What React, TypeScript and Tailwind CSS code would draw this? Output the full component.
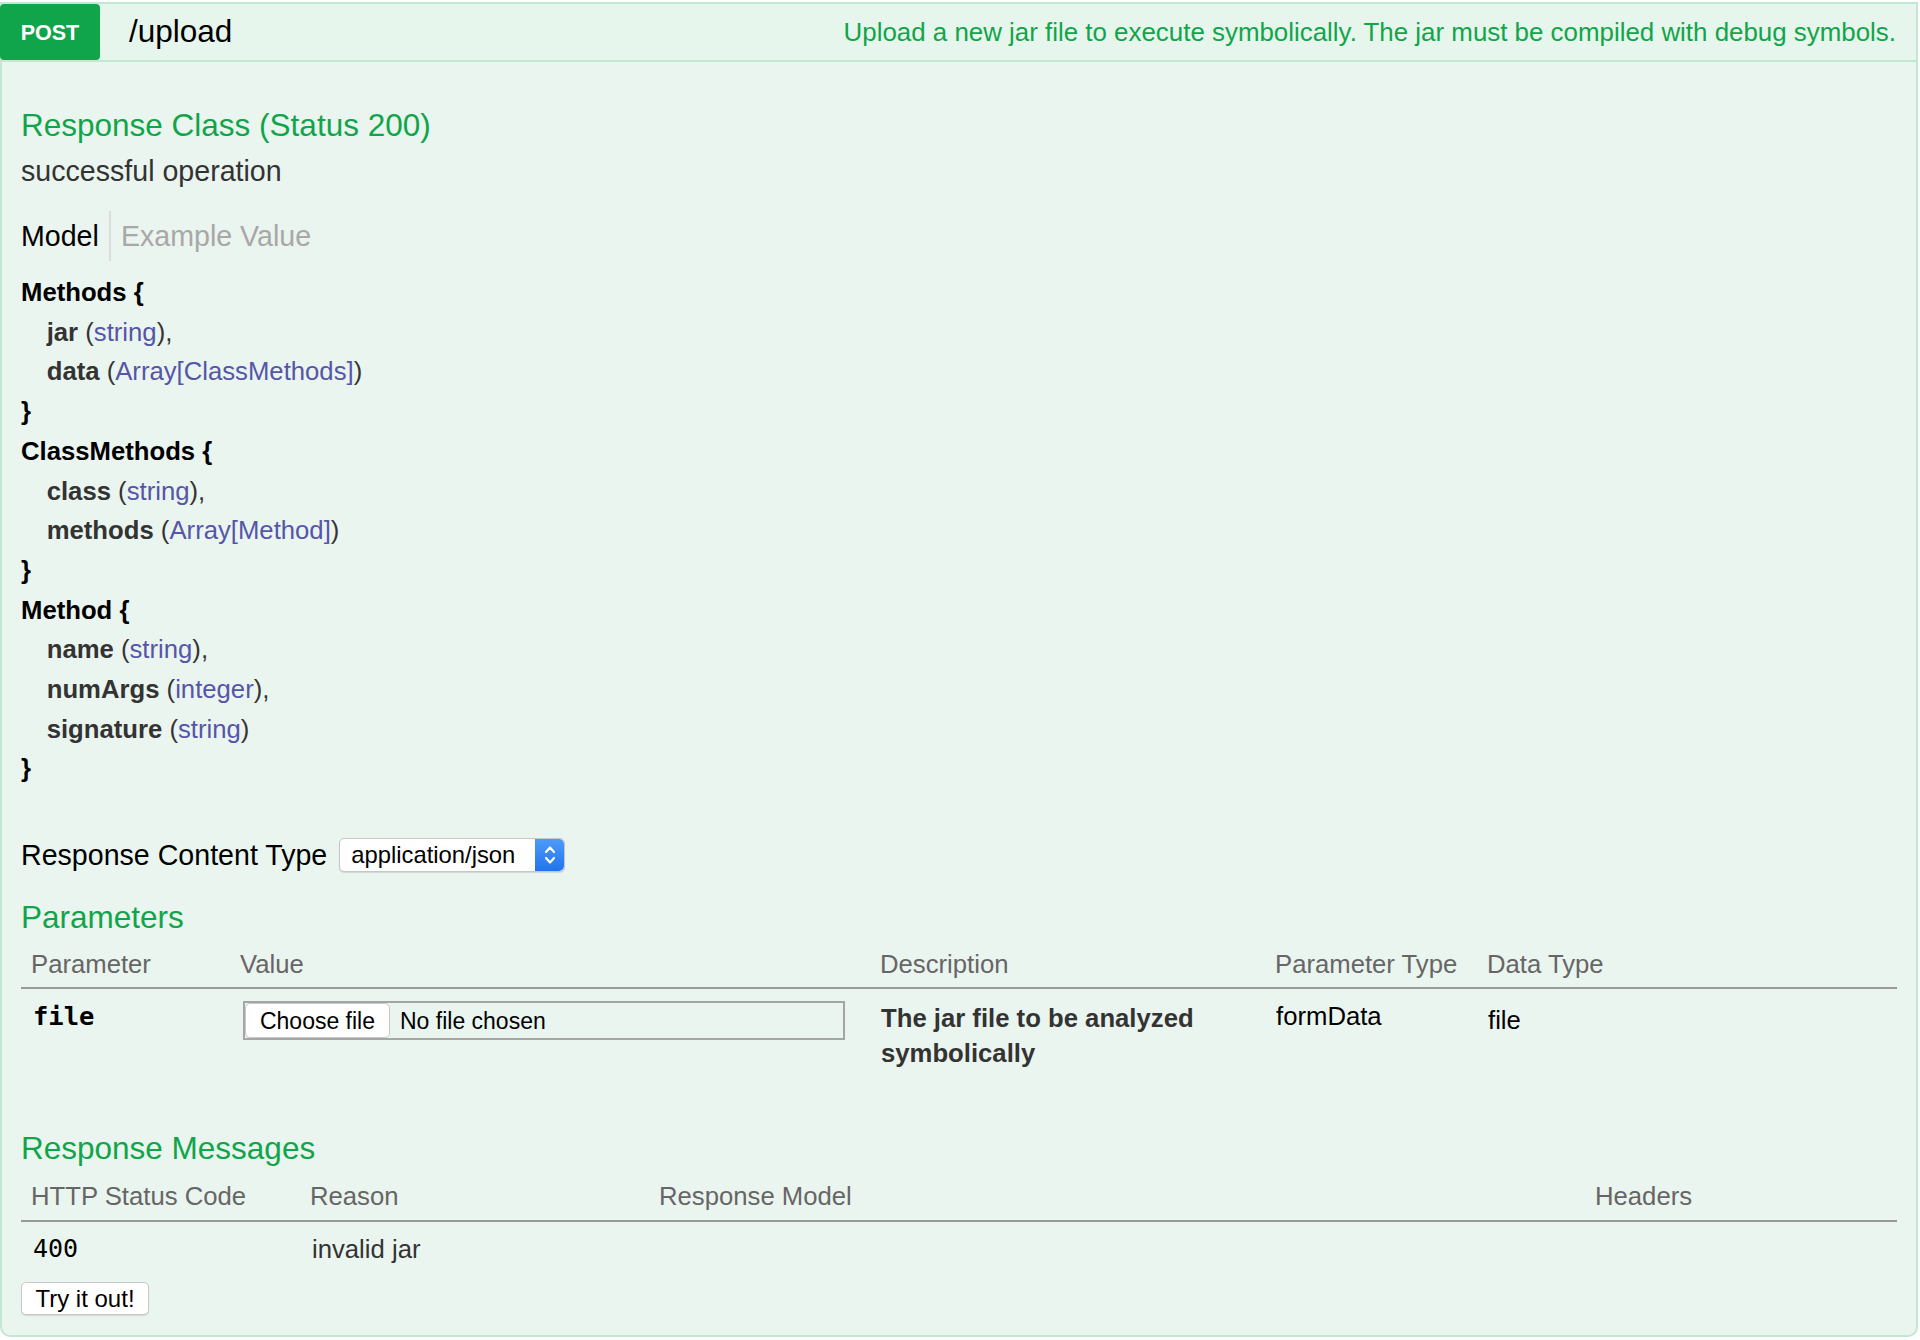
import React from "react";

type Model = { name: string; props: [string, string][] };

const models: Model[] = [
  { name: "Methods", props: [["jar", "string"], ["data", "Array[ClassMethods]"]] },
  { name: "ClassMethods", props: [["class", "string"], ["methods", "Array[Method]"]] },
  { name: "Method", props: [["name", "string"], ["numArgs", "integer"], ["signature", "string"]] },
];

const ModelSignature = () => (
  <div className="mt-[12px] text-[25.7px] leading-[39.7px] text-[#333]">
    {models.map((m) => (
      <div key={m.name}>
        <div className="font-bold text-black">{m.name} {"{"}</div>
        {m.props.map(([key, type], i) => (
          <div key={key} className="pl-[25.7px]">
            <span className="font-bold">{key}</span> (
            <span className="text-[#5555aa]">{type}</span>)
            {i < m.props.length - 1 && ","}
          </div>
        ))}
        <div className="font-bold text-black">{"}"}</div>
      </div>
    ))}
  </div>
);

const SelectBox = () => (
  <div className="flex h-[34px] w-[226px] items-stretch rounded-[5px] border border-[#c6c6c6] bg-white shadow-[0_1px_1px_rgba(0,0,0,0.12)]">
    <div className="flex flex-1 items-center pl-[11px] text-[23.8px] text-black">application/json</div>
    <div className="flex w-[29px] items-center justify-center rounded-r-[5px] bg-gradient-to-b from-[#4d9bf8] to-[#1f73ee]">
      <svg width="14" height="24" viewBox="0 0 14 24" fill="none" stroke="white" strokeWidth="2.2" strokeLinecap="round" strokeLinejoin="round">
        <path d="M3 9 L7 4.5 L11 9" />
        <path d="M3 15 L7 19.5 L11 15" />
      </svg>
    </div>
  </div>
);

const FileInput = () => (
  <div className="ml-[3px] flex h-[39px] w-[602px] items-center border-2 border-[#a5a5a5] text-[23px] text-black">
    <div className="flex h-[35px] w-[145px] items-center justify-center rounded-[5px] border border-[#c8c8c8] bg-white">
      Choose file
    </div>
    <span className="ml-[10px]">No file chosen</span>
  </div>
);

export default function App() {
  return (
    <div className="min-h-screen bg-white pt-[2px] pr-[2px] font-['Liberation_Sans',Arial,sans-serif] text-[28.6px]">
      {/* heading bar */}
      <div className="flex h-[60px] items-center border-t-2 border-r-2 border-b-2 border-[#c3e8d1] bg-[#e7f6ec]">
        <div className="flex h-[56px] w-[100px] items-center justify-center rounded-[4px] bg-[#10a54a] pt-[2px] text-[21.5px] font-bold text-white">
          POST
        </div>
        <div className="ml-[29px] text-[31.5px] text-black">/upload</div>
        <div className="ml-auto pr-[20px] text-[25.9px] text-[#10a54a]">
          Upload a new jar file to execute symbolically. The jar must be compiled with debug symbols.
        </div>
      </div>

      {/* operation body */}
      <div className="rounded-b-[10px] border-r-2 border-b-2 border-l-2 border-[#c3e8d1] bg-[#ebf5ef] px-[19px] pt-[43px] pb-[20px]">
        <h4 className="h-[40px] text-[31.5px] leading-[40px] text-[#10a54a]">Response Class (Status 200)</h4>
        <div className="mt-[8px] h-[36px] leading-[36px] text-[#333]">successful operation</div>

        <div className="mt-[22px] flex h-[50px] items-center">
          <span className="pr-[10px] text-black">Model</span>
          <span className="h-full w-[2px] bg-[#dcdcdc]" />
          <span className="pl-[10px] text-[#a8a8a8]">Example Value</span>
        </div>

        <ModelSignature />

        <div className="mt-[49px] flex h-[34px] items-center gap-[12px]">
          <span className="text-black">Response Content Type</span>
          <SelectBox />
        </div>

        <h4 className="mt-[25px] h-[40px] text-[31.5px] leading-[40px] text-[#10a54a]">Parameters</h4>
        <div className="text-[25.7px]">
          <div className="grid grid-cols-[209px_640px_395px_212px_1fr] border-b-2 border-[#999] pt-[9px] pb-[5px] leading-[36px] text-[#666]">
            <div className="pl-[10px]">Parameter</div>
            <div className="pl-[10px]">Value</div>
            <div className="pl-[10px]">Description</div>
            <div className="pl-[10px]">Parameter Type</div>
            <div className="pl-[10px]">Data Type</div>
          </div>
          <div className="grid grid-cols-[209px_640px_395px_212px_1fr] pt-[12px] pb-[10px] leading-[30px] text-black">
            <div className="pl-[12px] font-['DejaVu_Sans_Mono',Menlo,monospace] text-[25.5px] font-bold">file</div>
            <div className="pl-[10px]">
              <FileInput />
            </div>
            <div className="pr-[10px] pl-[11px] leading-[35px] font-bold text-[#333]">
              The jar file to be analyzed symbolically
            </div>
            <div className="pl-[11px]">formData</div>
            <div className="pt-[4px] pl-[11px]">file</div>
          </div>
        </div>

        <h4 className="mt-[47px] h-[40px] text-[31.5px] leading-[40px] text-[#10a54a]">Response Messages</h4>
        <div className="text-[25.7px]">
          <div className="grid grid-cols-[279px_349px_936px_1fr] border-b-2 border-[#999] pt-[10px] pb-[6px] leading-[36px] text-[#666]">
            <div className="pl-[10px]">HTTP Status Code</div>
            <div className="pl-[10px]">Reason</div>
            <div className="pl-[10px]">Response Model</div>
            <div className="pl-[10px]">Headers</div>
          </div>
          <div className="grid grid-cols-[279px_349px_936px_1fr] pt-[12px] leading-[30px] text-[#333]">
            <div className="pl-[12px] font-['DejaVu_Sans_Mono',Menlo,monospace] text-[25px] text-black">400</div>
            <div className="pl-[12px]">invalid jar</div>
            <div />
            <div />
          </div>
        </div>

        <button className="mt-[18px] flex h-[33px] w-[128px] items-center justify-center rounded-[5px] border border-[#c8c8c8] bg-white text-[24px] text-black shadow-[0_1px_1px_rgba(0,0,0,0.12)]">
          Try it out!
        </button>
      </div>
    </div>
  );
}
